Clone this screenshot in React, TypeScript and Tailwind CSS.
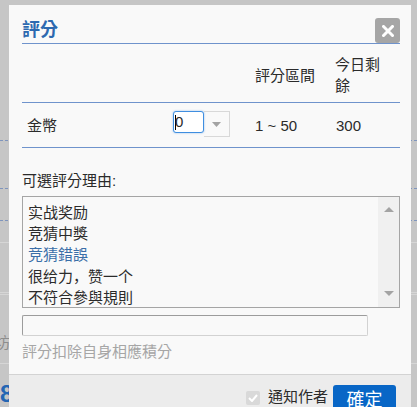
import React from 'react';

const reasons = ['实战奖励', '竞猜中獎', '竞猜錯誤', '很给力，赞一个', '不符合參與規則'];

const App: React.FC = () => {
  return (
    <div className="relative w-[417px] h-[407px] overflow-hidden bg-[#c6c6c6] font-['Liberation_Sans','Noto_Sans_CJK_TC',sans-serif] text-[15px] text-[#2b2b2b]">
      {/* page behind the overlay */}
      <div className="flex flex-col pt-[140px]">
        <div className="border-t border-dashed border-[#7f95bd]" />
        <div className="mt-[47px] border-t border-dashed border-[#7f95bd]" />
        <div className="mt-[31px] border-t border-dashed border-[#7f95bd]" />
        <div className="mt-[21px] border-t border-[#d6d6d6]" />
        <div className="mt-[49px] border-t border-[#d6d6d6]" />
        <div className="mt-[1px] border-t border-[#d6d6d6]" />
        <div className="mt-[38px] -ml-[5px] text-[15px] leading-[20px] text-[#8d8d8d]">坊</div>
        <div className="mt-[10px] border-t border-[#d6d6d6]" />
        <div className="mt-[16px] text-[24px] leading-[28px] font-bold text-[#2466b4]">8</div>
      </div>

      {/* dialog */}
      <div className="absolute left-[9px] top-[5px] w-[402px] h-[440px] flex flex-col bg-[#f9f9f9]">
        <div className="pt-[13px] pl-[13px] pr-[11px]">
          <div className="flex items-center justify-between h-[26px] border-b border-[#6f93cc]">
            <span className="text-[18px] leading-[25px] font-bold text-[#2d69b0]">評分</span>
            <button className="w-[25px] h-[25px] rounded-[3px] bg-[#a6a6a6] flex items-center justify-center">
              <svg width="12" height="12" viewBox="0 0 12 12">
                <path d="M1.5 1.5 L10.5 10.5 M10.5 1.5 L1.5 10.5" stroke="#fff" strokeWidth="3" strokeLinecap="square" />
              </svg>
            </button>
          </div>

          <div className="grid grid-cols-[151px_82px_80px_65px] h-[59px] pt-[4px] items-center border-b border-[#6f93cc] leading-[21px]">
            <div />
            <div />
            <div>評分區間</div>
            <div className="w-[48px]">今日剩餘</div>
          </div>

          <div className="grid grid-cols-[151px_82px_80px_65px] h-[45px] items-center border-b border-[#6f93cc] leading-[21px]">
            <div className="pl-[5px]">金幣</div>
            <div className="flex items-start pb-[2px]">
              <div className="w-[31px] h-[22px] border border-[#3f8ee0] rounded-[3px] shadow-[0_0_2px_rgba(63,142,224,0.6)] bg-white flex items-center pl-[1px]">
                <span className="w-[1px] h-[15px] bg-black" />
                <span className="-ml-[1px] leading-[18px]">0</span>
              </div>
              <div className="w-[26px] h-[26px] border border-l-0 border-[#d8d8d8] flex items-center justify-center">
                <svg width="9" height="5" viewBox="0 0 9 5">
                  <path d="M0 0 H9 L4.5 5 Z" fill="#a3a3a3" />
                </svg>
              </div>
            </div>
            <div>1 ~ 50</div>
            <div className="pl-[1px]">300</div>
          </div>

          <div className="mt-[22px] leading-[21px]">可選評分理由:</div>

          <div className="mt-[5px] h-[112px] border border-[#a5a5a5] flex">
            <div className="flex-1 pl-[5px] pt-[5px] overflow-hidden leading-[21px]">
              {reasons.map((r, i) => (
                <div key={i} className={i === 2 ? 'text-[#3a6ea8]' : ''}>
                  {r.includes('，') ? (
                    <>
                      很给力<span className="font-['Noto_Sans_CJK_SC',sans-serif]">，</span>赞一个
                    </>
                  ) : (
                    r
                  )}
                </div>
              ))}
            </div>
            <div className="w-[21px] bg-[#f0f0f0] flex flex-col items-center justify-between pt-[10px] pb-[11px]">
              <svg width="10" height="5" viewBox="0 0 10 5">
                <path d="M0 5 H10 L5 0 Z" fill="#a3a3a3" />
              </svg>
              <svg width="10" height="5" viewBox="0 0 10 5">
                <path d="M0 0 H10 L5 5 Z" fill="#a3a3a3" />
              </svg>
            </div>
          </div>

          <div className="mt-[7px] w-[346px] h-[21px] border border-[#9c9c9c] border-b-[#d2d2d2] border-r-[#d2d2d2] rounded-[2px] bg-[#f9f9f9]" />

          <div className="mt-[5px] leading-[21px] text-[#a6a6a6]">評分扣除自身相應積分</div>
        </div>

        <div className="mt-[12px] flex-1 border-t border-[#d3d3d3] bg-[#ececec] flex justify-end items-start pt-[10px] pr-[15px]">
          <div className="mt-[6px] w-[14px] h-[14px] rounded-[2px] bg-[#d9d9d9] flex items-center justify-center">
            <svg width="10" height="8" viewBox="0 0 10 8">
              <path d="M1 4 L4 7 L9 1" stroke="#fff" strokeWidth="2" fill="none" />
            </svg>
          </div>
          <span className="ml-[8px] mt-[1px] leading-[21px]">通知作者</span>
          <button className="ml-[5px] w-[63px] h-[30px] rounded-[3px] bg-[#0866c6] text-white text-[18px] leading-[30px]">
            確定
          </button>
        </div>
      </div>
    </div>
  );
};

export default App;
